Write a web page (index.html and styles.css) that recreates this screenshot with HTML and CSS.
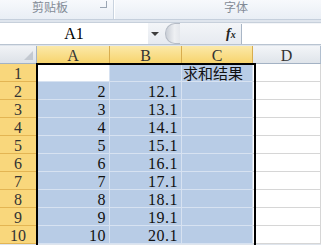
FILE: index.html
```html
<!DOCTYPE html>
<html lang="zh-CN">
<head>
  <meta charset="UTF-8" />
  <title>求和结果</title>
  <link rel="stylesheet" href="styles.css">
</head>
<body>
  <div class="ribbon">
    <div class="group group-clip">
      <span class="group-label">剪贴板</span>
      <span class="launcher"></span>
    </div>
    <div class="group group-font">
      <span class="group-label">字体</span>
    </div>
  </div>

  <div class="formula-bar">
    <div class="name-box">A1</div>
    <span class="drop-arrow"></span>
    <span class="grip"></span>
    <span class="fx">f<small>x</small></span>
    <div class="formula-input"></div>
  </div>

  <div class="sheet">
    <div class="corner"><span class="corner-tri"></span></div>
    <div class="col-head sel">A</div>
    <div class="col-head sel">B</div>
    <div class="col-head sel">C</div>
    <div class="col-head">D</div>

    <div class="row-head">1</div>
    <div class="cell active"></div>
    <div class="cell in"></div>
    <div class="cell in text">求和结果</div>
    <div class="cell"></div>

    <div class="row-head">2</div>
    <div class="cell in num">2</div>
    <div class="cell in num">12.1</div>
    <div class="cell in"></div>
    <div class="cell"></div>

    <div class="row-head">3</div>
    <div class="cell in num">3</div>
    <div class="cell in num">13.1</div>
    <div class="cell in"></div>
    <div class="cell"></div>

    <div class="row-head">4</div>
    <div class="cell in num">4</div>
    <div class="cell in num">14.1</div>
    <div class="cell in"></div>
    <div class="cell"></div>

    <div class="row-head">5</div>
    <div class="cell in num">5</div>
    <div class="cell in num">15.1</div>
    <div class="cell in"></div>
    <div class="cell"></div>

    <div class="row-head">6</div>
    <div class="cell in num">6</div>
    <div class="cell in num">16.1</div>
    <div class="cell in"></div>
    <div class="cell"></div>

    <div class="row-head">7</div>
    <div class="cell in num">7</div>
    <div class="cell in num">17.1</div>
    <div class="cell in"></div>
    <div class="cell"></div>

    <div class="row-head">8</div>
    <div class="cell in num">8</div>
    <div class="cell in num">18.1</div>
    <div class="cell in"></div>
    <div class="cell"></div>

    <div class="row-head">9</div>
    <div class="cell in num">9</div>
    <div class="cell in num">19.1</div>
    <div class="cell in"></div>
    <div class="cell"></div>

    <div class="row-head">10</div>
    <div class="cell in num">10</div>
    <div class="cell in num">20.1</div>
    <div class="cell in"></div>
    <div class="cell"></div>

    <div class="selection"></div>
  </div>
</body>
</html>
```

FILE: styles.css
```css
body {
  margin: 0;
  width: 321px;
  height: 245px;
  overflow: hidden;
  background: #dfe5ed;
  font-family: "Liberation Serif", "Noto Sans CJK SC", serif;
}

/* ribbon group labels */
.ribbon {
  display: flex;
  height: 19px;
  background: linear-gradient(#f7f9fc, #e9eef5);
  border-bottom: 1px solid #c5cfdc;
  overflow: hidden;
}
.group {
  position: relative;
  display: flex;
  align-items: center;
  border-right: 1px solid #c9d3df;
  box-shadow: 1px 0 0 #ffffff;
}
.group-clip {
  width: 113px;
}
.group-font {
  flex: 1;
  border-right: none;
  box-shadow: none;
}
.group-label {
  font-family: "Noto Sans CJK SC", sans-serif;
  font-size: 12px;
  color: #838b96;
  line-height: 12px;
  margin-top: -5px;
}
.group-clip .group-label {
  margin-left: 32px;
}
.group-font .group-label {
  margin-left: 110px;
}
.launcher {
  position: absolute;
  left: 100px;
  top: 1px;
  width: 6px;
  height: 6px;
  border-right: 1px solid #9aa5b3;
  border-bottom: 1px solid #9aa5b3;
}

/* formula bar */
.formula-bar {
  display: flex;
  align-items: center;
  height: 21px;
  margin-top: 2px;
  background: linear-gradient(#f3f5f8, #e6eaf0);
  border-top: 1px solid #c7d0db;
  border-bottom: 1px solid #b9c4d1;
}
.name-box {
  width: 148px;
  height: 21px;
  background: #ffffff;
  font-size: 16px;
  line-height: 22px;
  text-align: center;
  color: #000;
}
.drop-arrow {
  margin-left: 3px;
  width: 0;
  height: 0;
  border-left: 4px solid transparent;
  border-right: 4px solid transparent;
  border-top: 4px solid #3d3d3d;
}
.grip {
  margin-left: 6px;
  width: 14px;
  height: 19px;
  border-radius: 10px 0 0 10px;
  background: linear-gradient(90deg, #c9ced6, #eef0f3 60%, #e4e7ec);
  border: 1px solid #b6bcc6;
  border-right: none;
}
.fx {
  margin-left: 46px;
  font-family: "Liberation Serif", serif;
  font-style: italic;
  font-weight: bold;
  font-size: 14px;
  color: #222;
}
.fx small {
  font-size: 10px;
}
.formula-input {
  margin-left: 5px;
  flex: 1;
  height: 20px;
  background: #ffffff;
  border-left: 1px solid #a9b6c6;
}

/* grid */
.sheet {
  position: relative;
  display: grid;
  grid-template-columns: 37px 73px 72px 71px 68px;
  grid-auto-rows: 18px;
  margin-top: 1px;
  background: #ffffff;
}
.corner {
  position: relative;
  background: linear-gradient(#f1f3f6, #dde2e8);
  border-right: 1px solid #a3b2c4;
  border-bottom: 1px solid #a3b2c4;
}
.corner-tri {
  position: absolute;
  right: 3px;
  bottom: 3px;
  width: 0;
  height: 0;
  border-left: 9px solid transparent;
  border-bottom: 9px solid #c3c9d1;
}
.col-head {
  background: linear-gradient(#f3f5f8, #dfe4ea);
  border-right: 1px solid #b1bfcf;
  border-bottom: 1px solid #a3b2c4;
  text-align: center;
  font-size: 16px;
  line-height: 19px;
  color: #333;
}
.col-head.sel {
  background: linear-gradient(#fbe9a9, #f7d46e);
  border-right-color: #d8ad4f;
  border-bottom-color: #c29a3e;
}
.row-head {
  background: #f9d77c;
  border-right: 1px solid #c99a35;
  border-bottom: 1px solid #e3b553;
  text-align: center;
  font-size: 16px;
  line-height: 19px;
  color: #333;
}
.cell {
  border-right: 1px solid #d6d6d6;
  border-bottom: 1px solid #d6d6d6;
  font-size: 16px;
  line-height: 19px;
  color: #111;
}
.cell.in {
  background: #b8cce6;
  border-right-color: #d7e2f1;
  border-bottom-color: #d7e2f1;
}
.cell.active {
  background: #ffffff;
  border-right-color: #d7e2f1;
  border-bottom-color: #d7e2f1;
}
.num {
  text-align: right;
  padding-right: 3px;
  letter-spacing: 0.5px;
}
.text {
  font-family: "Noto Sans CJK SC", sans-serif;
  font-size: 15px;
  padding-left: 1px;
  line-height: 18px;
  white-space: nowrap;
}
.selection {
  position: absolute;
  left: 36px;
  top: 17px;
  width: 216px;
  height: 190px;
  border: 2px solid #000;
  pointer-events: none;
}
```
